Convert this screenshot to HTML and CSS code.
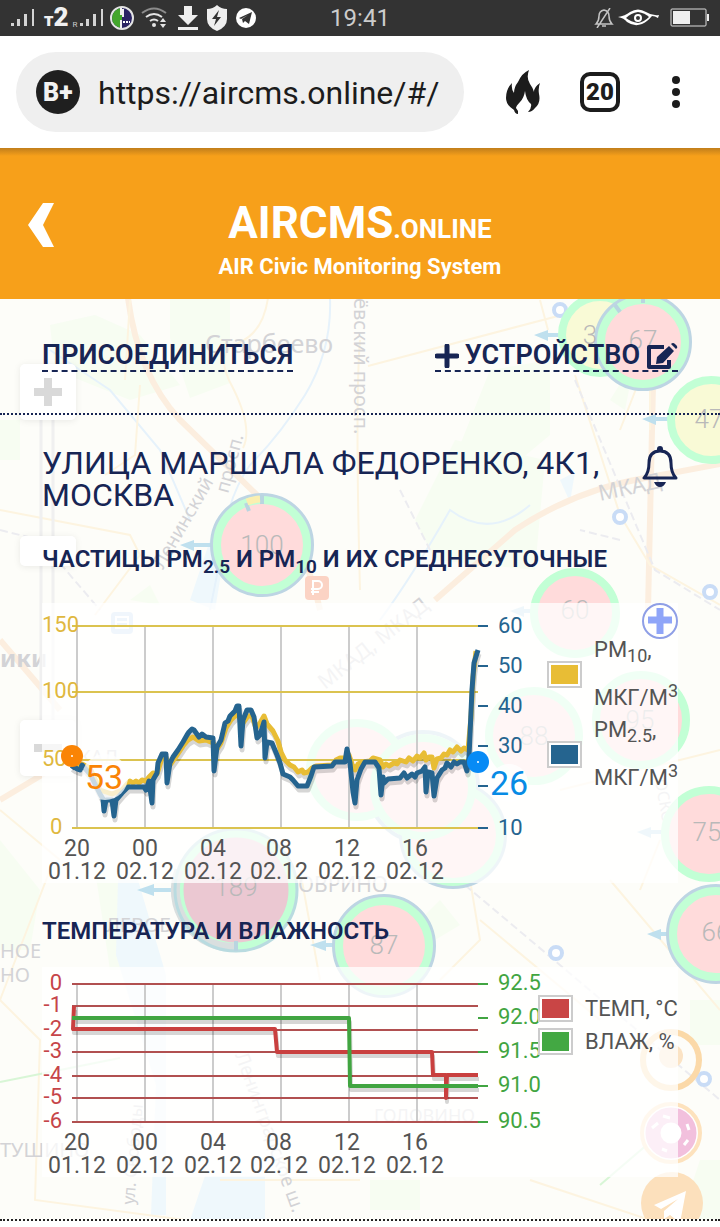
FILE: index.html
```
<!DOCTYPE html>
<html lang="ru">
<head>
    <meta charset="UTF-8">
    <meta name="viewport" content="width=device-width, initial-scale=1.0">
    <title>AIRCMS.online</title>
    <link rel="stylesheet" href="styles.css">
</head>
<body>
    <div class="statusbar">
        <div class="status-left">
            <svg width="26" height="20" viewBox="0 0 26 20" fill="#d4d4d4"><path d="M1 15h3v3H1zM7 11h3v7H7zM14 6h3v12h-3zM22 1h2v17h-2z"/></svg>
            <span class="operator"><small>т</small>2</span>
            <span class="roaming">R</span>
            <svg width="26" height="20" viewBox="0 0 26 20" fill="#d4d4d4"><path d="M1 15h3v3H1zM7 11h3v7H7zM14 6h3v12h-3zM22 1h2v17h-2z"/></svg>
            <svg width="26" height="26" viewBox="0 0 26 26"><circle cx="13" cy="13" r="11" fill="#2a2463" stroke="#e4e4e4" stroke-width="2"/><path d="M13 3a10 10 0 0 0 0 20z" fill="#43a62c"/><path d="M12 3v7M12 15v8M14 4v8" stroke="#f0f0f0" stroke-width="2"/><path d="M14 17h7" stroke="#fff" stroke-width="2" stroke-dasharray="2 1"/></svg>
            <svg class="wifi" width="26" height="22" viewBox="0 0 26 22" fill="none" stroke-width="2"><path d="M1 6q12-9 24 0" stroke="#8c8c8c"/><path d="M5 10q8-6 16 0M9 14q4-3 8 0" stroke="#e4e4e4"/><circle cx="13" cy="18" r="2" fill="#e4e4e4"/><path d="M19 15l3-4 3 4zM19 17l3 4 3-4z" fill="#e4e4e4"/></svg>
            <svg width="22" height="26" viewBox="0 0 22 26" fill="#efefef"><path d="M7 1h8v9h6L11 20 1 10h6zM1 22h20v3H1z"/></svg>
            <svg width="24" height="26" viewBox="0 0 24 26"><path d="M12 0q4 4 10 4v10q0 8-10 12Q2 22 2 14V4q6 0 10-4z" fill="#efefef"/><path d="M14 5L7 14h4l-2 7 7-9h-4z" fill="#333"/></svg>
            <svg width="22" height="22" viewBox="0 0 22 22"><circle cx="11" cy="11" r="10" fill="#fff"/><path d="M4 11l13-6-3 12-4-3-2 2-1-4 6-4-7 4z" fill="#333"/></svg>
        </div>
        <span class="clock">19:41</span>
        <div class="status-right">
            <svg width="20" height="20" viewBox="0 0 20 20" fill="none" stroke="#c4c4c4"><path d="M2 16q3-3 3-8 0-5 5-6 5 1 5 6 0 5 3 8zM8 18h4M3 20L16 0" stroke-width="1.5"/></svg>
            <svg width="42" height="20" viewBox="0 0 42 20"><path d="M0 9q7-1 12-5 8-5 16 0 6 4 13 3l-1 3q-3-2-6-2-5 6-10 8-8 3-15-2-3-4-9-5z" fill="#fff"/><path d="M8 10q5-5 12-6 7 1 11 5-5 5-11 6-7-1-12-5z" fill="#333"/><circle cx="20" cy="10" r="3" fill="none" stroke="#fff" stroke-width="2"/></svg>
            <svg width="40" height="20" viewBox="0 0 40 20"><rect x="1" y="1" width="35" height="17" rx="1" fill="none" stroke="#ddd"/><path d="M3 3h17v13H3zM37 6h2v7h-2z" fill="#efefef"/></svg>
        </div>
    </div>

    <div class="browser">
        <div class="address">
            <svg width="44" height="44" viewBox="0 0 44 44"><circle cx="22" cy="22" r="22" fill="#1f1f1f"/><text class="logo-b" x="7" y="31">B+</text></svg>
            <input class="url" type="text" value="https://aircms.online/#/" aria-label="Адрес">
        </div>
        <div class="tools">
            <button class="tool" aria-label="Очистить"><svg width="34" height="46" viewBox="0 0 34 46"><path d="M23 1q-3 8 1 14 3 4 4 8 0-5 6-9-2 5-1 11 2 9-4 14-3 4-7 4 4-4 3-8-5-4-6-13-1 7-5 11-4 4-4 6l2 3v3q-3 0-4-4-8-5-8-12Q0 20 6 14q-1 6 2 10 0-6 4-11Q16 4 23 1z" fill="#1c1c1c"/></svg></button>
            <button class="tool tabs">20</button>
            <button class="tool" aria-label="Меню"><svg width="12" height="36" viewBox="0 0 12 36" fill="#1c1c1c"><circle cx="6" cy="6" r="4"/><circle cx="6" cy="18" r="4"/><circle cx="6" cy="30" r="4"/></svg></button>
        </div>
    </div>

    <header class="header">
        <button class="back" aria-label="Назад"><svg width="28" height="46" viewBox="0 0 28 46"><path d="M1 23L16 1h11L16 23l11 22H16z" fill="#fff"/></svg></button>
        <div class="brand">
            <h1>AIRCMS<span>.ONLINE</span></h1>
            <p>AIR Civic Monitoring System</p>
        </div>
    </header>

    <main class="content">
        <!-- faded city map behind the panel -->
        <svg class="map" viewBox="0 299 720 922" preserveAspectRatio="xMidYMin slice" aria-hidden="true">
            <g fill="#f7fdf2">
                <path d="M50 325l45-10 45 20 40 50-50 15-75-30zM170 298h60v85l-40 15-20-60zM490 370l60-10v75l-30 25-60-15zM455 440l90 20-10 110-100-10-20-40zM0 420h20v40H0zM130 600l20-15 10 20zM0 840l40 50-10 60H0zM95 870h25l40 100h-50zM440 900l20 25-25 15-20-15zM690 1000h30v45h-30zM700 1160h20v60h-40zM370 1180h50v30h-50zM610 400l25-40-10 50z"/>
            </g>
            <g fill="#eff8fc">
                <path d="M118 880h20l28 95v240h-15l5-130-40-130zM205 1176h60v44h-75zM190 600l20-60 15 10-10 60zM560 480l15-8-5 30z"/>
            </g>
            <path class="river" d="M330 298Q332 350 305 395 280 435 250 465 225 500 220 560l-10 50" stroke-width="6"/>
            <path class="river" d="M380 620q30-40 70-110 40 30 80-5M50 350l60 40 50 60 30 70"/>
            <g class="road-wide">
                <path d="M128 298Q138 375 180 420L262 500Q305 540 320 610M435 600l80-70q60-40 130-52l75-14M653 385l-5 225M0 640l60 70M0 800l50-30"/>
            </g>
            <g class="road">
                <path d="M268 298q-5 35-30 45-25 10-5 45 20 40 10 60M140 385l-5 70-30 20M0 510l130 25 10 20-45 60M368 366l190-50M540 300l8 30M575 375l45 140 30 50 70 40M620 430l35-90M0 810l60 50M650 370v60M360 340q-5 60 0 250M130 300l-5 80M470 880l10 60-40 40M610 880l110 130M480 920L600 1020M50 870L0 1000l40 40-5 160 150 20M220 1180h140M530 1180l150 50M560 790l160-40M640 890l20-50M300 870l20 110"/>
            </g>
            <g class="rail">
                <path d="M0 530l40 10 60 70M575 380l80 190 65 40M465 885L720 1100M620 540l-40-10M400 490l30 60"/>
            </g>
            <path d="M0 1082l120-24M600 1185l70-60" fill="none" stroke="#d8f6d6" stroke-width="2"/>

            <g class="map-names">
                <text x="205" y="353" font-size="25">Старбеево</text>
                <text transform="translate(354 298) rotate(90)" font-size="20">ёвский просп.</text>
                <text transform="translate(163 570) rotate(-60)" font-size="19">Ленинский</text>
                <text transform="translate(228 494) rotate(-75)" font-size="19">просп.</text>
                <text transform="translate(600 501) rotate(-12)" font-size="22">МКАД</text>
                <text transform="translate(325 690) rotate(-38)" font-size="21">МКАД, МКАД</text>
                <text x="0" y="667" font-size="24" font-weight="700">ики</text>
                <text x="60" y="764" font-size="20">МКАД</text>
                <text x="298" y="892" font-size="21">ОВРИНО</text>
                <text x="106" y="932" font-size="20">ЛЕВОБ</text>
                <text x="0" y="958" font-size="20">НОЕ</text>
                <text x="0" y="982" font-size="20">НО</text>
                <text x="0" y="1157" font-size="20">ТУШИНО</text>
                <text x="374" y="1122" font-size="18">ГОЛОВИНО</text>
                <text transform="translate(235 1055) rotate(70)" font-size="19">Ленинградское ш.</text>
                <text transform="translate(134 1205) rotate(-85)" font-size="17">ул. Свободы</text>
                <text transform="translate(655 780) rotate(80)" font-size="16">ОСКО</text>
            </g>

            <g class="station">
                <circle cx="560" cy="310" r="6"/><circle cx="620" cy="517" r="6"/><circle cx="710" cy="592" r="6"/><circle cx="556" cy="953" r="6"/><circle cx="704" cy="1079" r="6"/>
            </g>
            <g class="arrow">
                <path d="M534 335l14-5v3h14v4h-14v4zM642 419l14-5v3h14v4h-14v4zM180 545l14-5v3h20v4h-20v4zM137 890l17-6v4h24v4h-24v4zM310 945l16-5v3h12v4h-12v4zM647 934l14-5v3h12v4h-12v4zM637 832l14-5v3h12v4h-12v4zM510 611l14-5v3h10v4h-10v4z"/>
            </g>

            <g class="sensor yellow"><circle cx="600" cy="335" r="38"/><circle cx="711" cy="420" r="40"/></g>
            <g class="sensor rim"><circle cx="643" cy="342" r="47"/><circle cx="262" cy="545" r="50"/><circle cx="384" cy="946" r="50"/><circle cx="716" cy="934" r="48"/><circle cx="423" cy="787" r="55"/><circle cx="453" cy="835" r="52"/></g>
            <g class="sensor"><circle cx="643" cy="342" r="42"/><circle cx="262" cy="545" r="45"/><circle cx="575" cy="613" r="41"/><circle cx="534" cy="736" r="45"/><circle cx="641" cy="720" r="45"/><circle cx="709" cy="834" r="44"/><circle cx="384" cy="946" r="45"/><circle cx="716" cy="934" r="43"/><circle cx="453" cy="835" r="47"/><circle cx="357" cy="770" r="47"/><circle cx="423" cy="787" r="49"/></g>
            <circle cx="236" cy="890" r="57" fill="#ebc8d2" stroke="#c2ffd5" stroke-width="9"/>
            <path d="M179 870a57 57 0 0 0 57 77" fill="none" stroke="#d9dfdf" stroke-width="9"/>
            <circle cx="236" cy="890" r="61" fill="none" stroke="#b9dbe0" stroke-width="3"/>
            <path d="M246 503l3 8M262 495v9M615 305l5 7M643 294v9M236 941v10" stroke="#b9d5e0" stroke-width="4"/>
            <path d="M247 502a45 45 0 0 1 13-3" fill="none" stroke="#fbefb0" stroke-width="7"/>
            <g class="sensor-value">
                <text x="590" y="344">3</text><text x="643" y="349">67</text><text x="709" y="428">47</text><text x="262" y="554">100</text><text x="575" y="619">60</text><text x="534" y="745">88</text><text x="640" y="729">95</text><text x="707" y="841">75</text><text x="236" y="896">189</text><text x="384" y="954">87</text><text x="716" y="941">66</text>
            </g>
            <rect x="305" y="576" width="24" height="24" rx="4" fill="#fbd3c4"/>
            <path d="M313 595v-14h5a4 4 0 0 1 0 8h-7M311 592h8" fill="none" stroke="#fff" stroke-width="2"/>
            <rect x="111" y="612" width="22" height="22" rx="4" fill="#c3daf1"/>
            <path d="M116 617h12v5h-12zM116 622v6h12v-6" fill="none" stroke="#fff" stroke-width="2"/>

            <!-- zoom control -->
            <path d="M41 420v310M53 420v310" stroke="#f0f0f0" stroke-width="3"/>
            <g class="zoom">
                <rect x="20" y="364" width="56" height="56" rx="5"/><rect x="20" y="536" width="56" height="30" rx="5"/><rect x="20" y="720" width="56" height="56" rx="5"/>
            </g>
            <path d="M34 388h10v-10h8v10h10v8H52v10h-8V396H34zM34 744h28v8H34z" fill="#d9d9d9"/>

            <!-- floating map buttons -->
            <circle cx="671" cy="1060" r="28" fill="none" stroke="#fbd9a8" stroke-width="6"/>
            <circle cx="671" cy="1056" r="12" fill="#fbe3c4"/>
            <circle cx="671" cy="1133" r="29" fill="#fff" stroke="#fde2bd" stroke-width="4"/>
            <circle cx="671" cy="1133" r="18" fill="none" stroke="#f2c0dd" stroke-width="15"/>
            <path d="M652 1128l6-5M663 1116l7 2M687 1124l2 6M684 1145l4-5M662 1149l5 2" stroke="#fff" stroke-width="3"/>
            <circle cx="672" cy="1203" r="31" fill="#fce0bc"/>
            <path d="M654 1205l32-14-6 32-10-8-6 4v-8l14-12-17 10z" fill="#fff"/>
        </svg>

        <nav class="join">
            <a href="#join">ПРИСОЕДИНИТЬСЯ</a>
            <a href="#device"><svg width="24" height="24" viewBox="0 0 24 24"><path d="M12 2v20M2 12h20" stroke="#172554" stroke-width="5" stroke-linecap="round"/></svg> УСТРОЙСТВО <svg width="32" height="28" viewBox="0 0 32 28"><path d="M18 5H3v20h20v-7" fill="none" stroke="#172554" stroke-width="4" stroke-linejoin="round"/><path d="M10 22l1-7L23 4l5 5-11 12zM25 2q2-2 4 0l2 2q1 2-1 3z" fill="#172554"/></svg></a>
        </nav>

        <section class="device">
            <div class="address-row">
                <h2>УЛИЦА МАРШАЛА ФЕДОРЕНКО, 4К1, МОСКВА</h2>
                <button class="bell" aria-label="Уведомления"><svg width="36" height="44" viewBox="0 0 36 44"><path d="M2 33h32q-5-5-5-15Q29 6 18 6T7 18q0 10-5 15z" fill="none" stroke="#172554" stroke-width="3" stroke-linejoin="round"/><path d="M15 6V4q0-3 3-3t3 3v2zM12 37h12q-2 5-6 5t-6-5z" fill="#172554"/></svg></button>
            </div>

            <h3>ЧАСТИЦЫ PM<sub>2.5</sub> И PM<sub>10</sub> И ИХ СРЕДНЕСУТОЧНЫЕ</h3>
            <div class="chart chart-pm">
                <svg class="plot" viewBox="42 603 505 280">
                    <path class="grid" d="M77 626v202M145 626v202M213 626v202M281 626v202M349 626v202M417 626v202"/>
                    <path class="grid-pm" d="M72 626h406M72 692h406M72 760h406M72 828h406"/>
                    <path d="M478 626h10M478 666h10M478 706h10M478 746h10M478 786h10M478 828h10" stroke="#25648f" stroke-width="2"/>
                    <g fill="#dfb83f">
                        <text x="42" y="632">150</text><text x="42" y="698">100</text><text x="42" y="766">50</text><text x="50" y="834">0</text>
                    </g>
                    <g class="line">
                        <path stroke="#e8bd35" d="M72 766L82 764 90 768 100 790 112 794 122 790 128 783 130 781 133 783 136 781 139 783 142 780 146 781 149 777 153 773 157 774 162 758 166 758 170 765 175 758 183 746 188 740 193 737 199 741 206 740 213 743 217 749 221 743 226 728 231 720 237 714 243 723 248 716 252 716 256 728 260 723 264 716 267 724 273 731 278 741 281 752 285 760 290 765 294 767 298 772 302 770 304 773 308 772 312 768 316 766 332 765 336 760 340 758 346 758 349 755 352 764 355 770 358 764 362 762 370 761 373 758 380 760 383 767 386 764 389 766 394 763 397 764 400 760 406 762 409 758 413 761 417 756 420 758 424 753 426 760 429 757 432 757 434 768 437 759 441 758 444 754 447 755 450 750 453 752 457 747 461 751 464 748 468 750 471 717 473 677 476 651"/>
                        <path stroke="#25648f" d="M72 769L74 766 77 769 80 770 82 765 90 774 94 782 100 794 103 799 104 811 106 800 112 800 114 816 116 800 122 793 128 787 144 787 146 790 149 781 152 803 153 780 157 773 158 763 162 754 166 754 167 783 170 763 173 757 178 750 183 742 187 735 189 732 192 729 194 730 199 737 202 734 206 737 213 738 214 771 217 747 221 740 225 723 228 721 230 716 235 711 237 706 239 706 241 746 243 720 247 710 251 710 254 717 257 738 260 735 264 722 265 758 267 742 272 743 277 755 280 763 283 774 290 777 293 780 298 786 307 786 311 776 314 767 332 766 335 762 345 762 347 749 350 763 353 792 355 803 357 780 361 769 365 762 375 762 379 768 381 795 383 777 384 783 388 779 400 778 404 773 407 778 412 774 415 777 417 773 422 771 425 767 426 792 428 772 432 773 434 796 437 778 442 770 445 768 447 763 451 767 454 762 457 764 460 762 464 762 467 771 469 757 472 690 474 663 478 650"/>
                    </g>
                    <circle cx="105" cy="777" r="23" fill="#fff" fill-opacity=".75"/>
                    <circle cx="509" cy="783" r="19" fill="#fff" fill-opacity=".8"/>
                    <circle cx="72" cy="756" r="11" fill="#fa8405"/><circle cx="72" cy="756" r="1" fill="#fff"/>
                    <circle cx="478" cy="762" r="11" fill="#078bf5"/><circle cx="478" cy="762" r="1" fill="#fff"/>
                    <text class="mean" x="85" y="789" fill="#fa8405">53</text>
                    <text class="mean" x="490" y="795" fill="#078be5">26</text>
                    <g fill="#25648f">
                        <text x="498" y="633">60</text><text x="498" y="673">50</text><text x="498" y="713">40</text><text x="498" y="753">30</text><text x="498" y="835">10</text>
                    </g>
                    <g class="hours">
                        <text x="77" y="856">20</text><text x="145" y="856">00</text><text x="213" y="856">04</text><text x="279" y="856">08</text><text x="347" y="856">12</text><text x="415" y="856">16</text>
                        <text x="77" y="879">01.12</text><text x="145" y="879">02.12</text><text x="213" y="879">02.12</text><text x="279" y="879">02.12</text><text x="347" y="879">02.12</text><text x="415" y="879">02.12</text>
                    </g>
                </svg>
                <ul class="legend legend-pm">
                    <li><i class="swatch pm10"></i><span>PM<sub>10</sub>,<br>МКГ/М<sup>3</sup></span></li>
                    <li><i class="swatch pm25"></i><span>PM<sub>2.5</sub>,<br>МКГ/М<sup>3</sup></span></li>
                </ul>
                <button class="add" aria-label="Увеличить"><svg width="36" height="36" viewBox="0 0 36 36"><circle cx="18" cy="18" r="17" fill="none" stroke="#8f9fe6" stroke-width="2"/><path d="M18 5v26M6 17h24" stroke="#8fa5f8" stroke-width="7"/></svg></button>
            </div>

            <h3>ТЕМПЕРАТУРА И ВЛАЖНОСТЬ</h3>
            <div class="chart">
                <svg class="plot" viewBox="42 967 496 210">
                    <path class="grid" d="M77 984v138M145 984v138M213 984v138M281 984v138M349 984v138M417 984v138"/>
                    <path class="grid-temp" d="M72 984h406M72 1006h406M72 1030h406M72 1052h406M72 1076h406M72 1098h406M72 1122h406"/>
                    <path d="M478 984h10M478 1018h10M478 1052h10M478 1086h10M478 1122h10" stroke="#41a541" stroke-width="2"/>
                    <g class="line line-temp">
                        <path stroke="#c9403f" d="M74 1006L73 1029H275L277 1052H432L433 1075H446V1098L447 1075H478"/>
                        <path stroke="#41a541" d="M72 1018H349L350 1086H478"/>
                    </g>
                    <g fill="#c64549" text-anchor="end">
                        <text x="62" y="990">0</text><text x="62" y="1012">-1</text><text x="62" y="1036">-2</text><text x="62" y="1058">-3</text><text x="62" y="1082">-4</text><text x="62" y="1104">-5</text><text x="62" y="1128">-6</text>
                    </g>
                    <g fill="#41a541">
                        <text x="498" y="990">92.5</text><text x="498" y="1024">92.0</text><text x="498" y="1058">91.5</text><text x="498" y="1092">91.0</text><text x="498" y="1128">90.5</text>
                    </g>
                    <g class="hours">
                        <text x="77" y="1150">20</text><text x="145" y="1150">00</text><text x="213" y="1150">04</text><text x="279" y="1150">08</text><text x="347" y="1150">12</text><text x="415" y="1150">16</text>
                        <text x="77" y="1173">01.12</text><text x="145" y="1173">02.12</text><text x="213" y="1173">02.12</text><text x="279" y="1173">02.12</text><text x="347" y="1173">02.12</text><text x="415" y="1173">02.12</text>
                    </g>
                </svg>
                <ul class="legend legend-temp">
                    <li><i class="swatch temp"></i><span>ТЕМП, °C</span></li>
                    <li><i class="swatch hum"></i><span>ВЛАЖ, %</span></li>
                </ul>
            </div>
        </section>
    </main>
</body>
</html>
```
FILE: styles.css
```
* {
    box-sizing: border-box;
}
body {
    margin: 0;
    font-family: Roboto, "Liberation Sans", sans-serif;
    background-color: #fff;
    color: #172554;
}
button {
    padding: 0;
    border: none;
    background: none;
    font-family: inherit;
    cursor: pointer;
}
svg {
    display: block;
    flex: none;
}

/* phone status bar */
.statusbar {
    display: grid;
    grid-template-columns: 1fr auto 1fr;
    align-items: center;
    height: 36px;
    padding: 0 10px;
    background-color: #333;
    color: #ccc;
}
.status-left,
.status-right {
    display: flex;
    align-items: center;
}
.status-left {
    gap: 4px;
}
.status-right {
    justify-content: flex-end;
    gap: 10px;
}
.status-right svg:first-child {
    margin-right: -6px;
}
.operator {
    margin-left: 4px;
    font-size: 26px;
    line-height: 32px;
    font-weight: 900;
    color: #f0f0f0;
}
.operator small {
    font-size: 18px;
}
.roaming {
    padding-top: 12px;
    margin-right: -2px;
    font-size: 8px;
}
.wifi {
    margin: 0 6px 0 2px;
}
.status-left svg:nth-last-child(-n+2) {
    margin-left: 2px;
}
.clock {
    font-size: 24px;
}

/* browser toolbar */
.browser {
    display: flex;
    align-items: center;
    gap: 42px;
    height: 112px;
    padding: 0 38px 0 16px;
}
.address {
    display: flex;
    flex: 1;
    align-items: center;
    gap: 18px;
    min-width: 0;
    height: 80px;
    padding: 0 20px;
    border-radius: 40px;
    background-color: #efefef;
}
.logo-b {
    font-size: 25px;
    font-weight: 900;
    fill: #f2f2f2;
}
.url {
    flex: 1;
    min-width: 0;
    padding: 2px 0 0;
    border: none;
    background: none;
    font-family: inherit;
    font-size: 32px;
    color: #1c1c1c;
}
.tools {
    display: flex;
    align-items: center;
    gap: 40px;
}
.tool:last-child {
    margin-left: 10px;
}
.tabs {
    width: 40px;
    height: 40px;
    border: 4px solid #1c1c1c;
    border-radius: 10px;
    font-size: 24px;
    line-height: 32px;
    font-weight: 900;
    color: #1c1c1c;
}

/* site header */
.header {
    display: grid;
    grid-template-columns: 60px 1fr 60px;
    align-items: center;
    height: 151px;
    background: linear-gradient(#c17e1b, #f7a01a 8px);
    color: #fff;
}
.back {
    justify-self: center;
    margin: 2px 0 0 22px;
}
.brand {
    padding-top: 35px;
    text-align: center;
}
.brand h1 {
    margin: 0;
    font-size: 44px;
    line-height: 44px;
}
.brand h1 span {
    font-size: 26px;
}
.brand p {
    margin: 2px 0 0;
    font-size: 22px;
    line-height: 28px;
    font-weight: 700;
}

/* map backdrop */
.content {
    position: relative;
    overflow: hidden;
    border-bottom: 2px dotted #222;
    background-color: #fdfdf9;
}
.map {
    position: absolute;
    top: 0;
    left: 0;
    width: 100%;
    height: 100%;
}
.river,
.road,
.road-wide,
.rail {
    fill: none;
}
.river {
    stroke: #e6f2fb;
    stroke-width: 2;
}
.road {
    stroke: #fdf4e0;
    stroke-width: 2;
}
.road-wide {
    stroke: #fceedf;
    stroke-width: 6;
}
.rail {
    stroke: #ececf0;
    stroke-width: 2;
    stroke-dasharray: 8 4;
}
.map-names {
    font-family: "Noto Sans", sans-serif;
    fill: #d3d3d6;
}
.station {
    fill: #fff;
    stroke: #c9dcf6;
    stroke-width: 4;
}
.arrow {
    fill: #bfe0ee;
}
.sensor {
    fill: #ffdbdb;
    stroke: #c2ffd5;
    stroke-width: 8;
}
.sensor.yellow {
    fill: #f9fad6;
}
.sensor.rim {
    fill: none;
    stroke: #bdd5e3;
    stroke-width: 4;
}
.sensor-value {
    font-size: 26px;
    font-weight: 300;
    text-anchor: middle;
    fill: #b9b9b9;
}
.zoom {
    fill: #fff;
    filter: drop-shadow(0 1px 3px rgba(0, 0, 0, 0.08));
}

/* links row */
.join {
    position: relative;
    display: flex;
    justify-content: space-between;
    align-items: flex-start;
    height: 116px;
    padding: 42px 42px 0;
    border-bottom: 2px dotted #172554;
}
.join a {
    display: flex;
    align-items: center;
    gap: 6px;
    height: 31px;
    border-bottom: 2px dashed #172554;
    font-size: 27px;
    line-height: 29px;
    font-weight: 600;
    color: #172554;
    text-decoration: none;
}

.device {
    position: relative;
    padding: 32px 42px 42px;
}
.address-row {
    display: flex;
    justify-content: space-between;
    align-items: flex-start;
    gap: 16px;
}
.address-row h2 {
    margin: 0;
    font-size: 32px;
    line-height: 32px;
    font-weight: 400;
}
.bell {
    margin-top: -2px;
}
h3 {
    margin: 34px 0 22px;
    font-size: 24px;
    line-height: 28px;
    font-weight: 600;
}
h3 sub {
    font-size: 19px;
    line-height: 0;
}

/* charts */
.chart {
    position: relative;
    display: flex;
    align-items: flex-start;
    background-color: rgba(255, 255, 255, 0.75);
}
.chart-pm {
    margin-top: 30px;
}
.plot {
    flex: 1;
    min-width: 0;
    overflow: visible;
    font-size: 22px;
}
.grid,
.grid-pm,
.grid-temp {
    fill: none;
    stroke: #ccc;
    stroke-width: 2;
}
.grid-pm {
    stroke: #dbc34f;
}
.grid-temp {
    stroke: #b15050;
}
.line {
    fill: none;
    stroke-width: 5;
    stroke-linejoin: round;
    filter: drop-shadow(1px 4px 0 rgba(0, 0, 0, 0.16));
}
.line-temp {
    stroke-width: 4;
}
.mean {
    font-size: 34px;
}
.hours {
    font-size: 23px;
    text-anchor: middle;
    fill: #545454;
}
.legend {
    position: relative;
    margin: 0;
    padding: 0;
    list-style: none;
    font-size: 22px;
    white-space: nowrap;
    color: #545454;
}
.legend li {
    display: flex;
    align-items: center;
    gap: 12px;
}
.legend-pm {
    width: 131px;
    padding-top: 31px;
}
.legend-pm li {
    height: 80px;
    line-height: 34px;
}
.legend-temp {
    width: 140px;
    padding-top: 25px;
}
.legend-temp li {
    height: 33px;
}
.legend sub,
.legend sup {
    font-size: 18px;
}
.swatch {
    flex: none;
    width: 35px;
    height: 27px;
    border: 2px solid #ccc;
    box-shadow: inset 0 0 0 2px #fff;
}
.pm10 {
    background-color: #e8bd35;
}
.pm25 {
    background-color: #25648f;
}
.temp {
    background-color: #c94545;
}
.hum {
    background-color: #43a843;
}
.add {
    position: absolute;
    top: 0;
    right: 0;
}
```
